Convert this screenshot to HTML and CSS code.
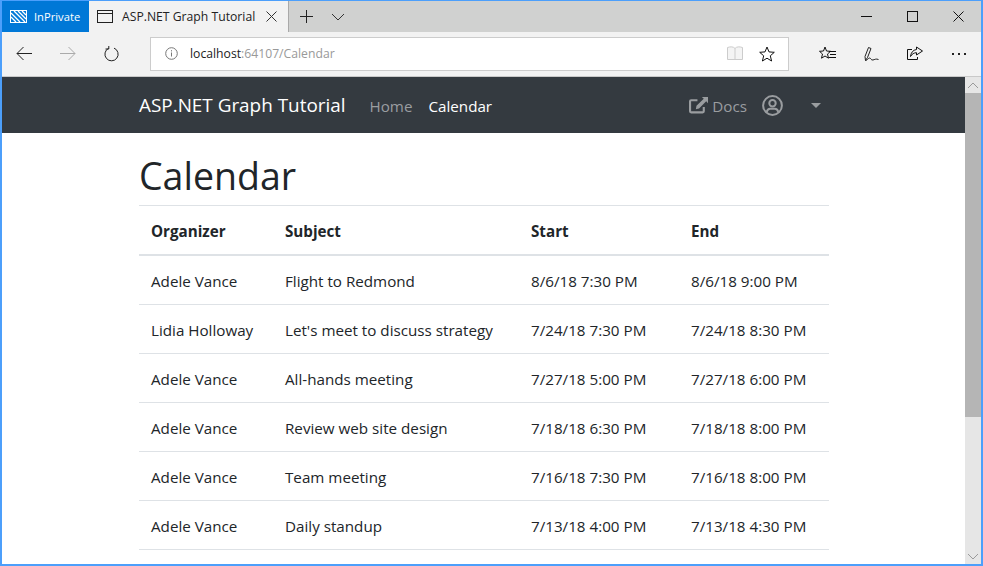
FILE: index.html
```html
<!DOCTYPE html>
<html>
	<head>
		<meta charset="UTF-8">
		<title>ASP.NET Graph Tutorial</title>
		<link rel="stylesheet" href="styles.css">
	</head>

	<body>
		<div class="window">
			<!-- tab strip -->
			<div class="tabstrip">
				<div class="inprivate">
					<svg class="ip-icon" width="17" height="13" viewBox="0 0 17 13">
						<rect x="0.5" y="0.5" width="16" height="12" fill="none" stroke="#fff"/>
						<path d="M1 3l9 9M1 7l5 5M4 1l11 11M8 1l8 8M12 1l4 4" stroke="#fff" stroke-width="1.3" fill="none"/>
					</svg>
					<span>InPrivate</span>
				</div>
				<div class="tab">
					<svg width="16" height="13" viewBox="0 0 16 13">
						<rect x="0.5" y="0.5" width="15" height="12" fill="none" stroke="#222"/>
						<path d="M0 3.5h16" stroke="#222"/>
					</svg>
					<span class="tab-title">ASP.NET Graph Tutorial</span>
					<svg class="tab-close" width="11" height="11" viewBox="0 0 11 11">
						<path d="M0.5 0.5l10 10M10.5 0.5l-10 10" stroke="#333" fill="none"/>
					</svg>
				</div>
				<div class="tab-tools">
					<svg width="15" height="15" viewBox="0 0 15 15"><path d="M7.5 1v13M1 7.5h13" stroke="#222" fill="none"/></svg>
					<svg width="14" height="8" viewBox="0 0 14 8"><path d="M1 1l6 6 6-6" stroke="#333" fill="none"/></svg>
				</div>
				<div class="win-btns">
					<svg width="11" height="11" viewBox="0 0 11 11"><path d="M0 5.5h11" stroke="#111"/></svg>
					<svg width="11" height="11" viewBox="0 0 11 11"><rect x="0.5" y="0.5" width="10" height="10" fill="none" stroke="#111"/></svg>
					<svg width="11" height="11" viewBox="0 0 11 11"><path d="M0.5 0.5l10 10M10.5 0.5l-10 10" stroke="#111" fill="none"/></svg>
				</div>
			</div>

			<!-- address bar -->
			<div class="toolbar">
				<div class="nav-btns">
					<svg width="16" height="15" viewBox="0 0 16 15"><path d="M16 7.5H1M7.5 1L1 7.5 7.5 14" stroke="#222" fill="none"/></svg>
					<svg width="16" height="15" viewBox="0 0 16 15"><path d="M0 7.5h15M8.5 1l6.500 6.500L8.500 14" stroke="#aaa" fill="none"/></svg>
					<svg width="15" height="16" viewBox="0 0 15 16"><path d="M4.600 2.300A6.600 6.600 0 1 0 10 2.100M4.800 0v3h-3.300" stroke="#222" fill="none"/></svg>
				</div>
				<div class="address">
					<svg width="13" height="13" viewBox="0 0 13 13">
						<circle cx="6.500" cy="6.500" r="5.800" fill="none" stroke="#777"/>
						<path d="M6.500 5.500v4M6.500 3.200v1.200" stroke="#777" fill="none"/>
					</svg>
					<span class="url"><span class="host">localhost</span>:64107/Calendar</span>
					<svg class="read-icon" width="16" height="15" viewBox="0 0 16 15">
						<path d="M0.500 1.500c3-1 6-1 7.500 1 1.500-2 4.500-2 7.500-1v12h-15zM8 2.500v11" stroke="#ccc" fill="#f4f4f4"/>
					</svg>
					<svg class="fav-icon" width="16" height="16" viewBox="0 0 16 16">
						<path d="M8 1l2 4.900 5.300.4-4 3.500 1.300 5.200L8 12.200l-4.600 2.800 1.300-5.200-4-3.500L6 5.900z" stroke="#111" fill="none"/>
					</svg>
				</div>
				<div class="tool-btns">
					<svg width="17" height="16" viewBox="0 0 17 16">
						<path d="M6 1l1.500 4 4 .3-3 2.700 1 4.200L6 10l-3.500 2.200 1-4.200-3-2.700 4-.3z" stroke="#111" fill="none"/>
						<path d="M10 5.500h7M11 8.500h6M10 11.500h7" stroke="#111" fill="none"/>
					</svg>
					<svg width="15" height="16" viewBox="0 0 15 16">
						<path d="M1.500 14.500L1 10.500 4.500 1.500l2.500 1-3.500 9zM1.500 14.500c2 0 2.500-2.500 4-2.500 1.500 0 1.500 2.500 3.500 2 1.500-.4 3-1.500 5.500-.5" stroke="#222" fill="none"/>
					</svg>
					<svg width="16" height="16" viewBox="0 0 16 16">
						<path d="M5 3.500H0.500v10h10V11" stroke="#111" fill="none"/>
						<path d="M9.500 1l6 4-6 4V6.700C7 6.700 5 8 3.500 10.500c.5-4 2.500-6.500 6-7z" stroke="#111" fill="none"/>
					</svg>
					<span class="more"><i></i><i></i><i></i></span>
				</div>
			</div>

			<div class="viewport">
				<div class="page">
					<!-- navbar -->
					<nav class="navbar">
						<div class="nav-inner">
							<a class="brand">ASP.NET Graph Tutorial</a>
							<a class="nav-link">Home</a>
							<a class="nav-link active">Calendar</a>
							<div class="nav-right">
								<a class="nav-link docs">
									<svg width="19" height="17" viewBox="0 0 18 16">
										<path d="M14 9.500v4a1 1 0 0 1-1 1H2a1 1 0 0 1-1-1V4a1 1 0 0 1 1-1h6" stroke="#9a9da0" stroke-width="2" fill="none"/>
										<path d="M6.500 11.500l.6-3.200L14 1.500l-1.800-1.500H18v5.800L16.300 4 9.500 10.800z" fill="#9a9da0"/>
									</svg>
									Docs
								</a>
								<svg class="avatar" width="21" height="21" viewBox="0 0 21 21">
									<circle cx="10.500" cy="10.500" r="9.400" fill="none" stroke="#9a9da0" stroke-width="2"/>
									<circle cx="10.500" cy="8.300" r="3.200" fill="none" stroke="#9a9da0" stroke-width="2"/>
									<path d="M4.700 17c.6-2.500 2-3.300 3.400-3.300h4.800c1.400 0 2.800.8 3.400 3.300" fill="none" stroke="#9a9da0" stroke-width="2"/>
								</svg>
								<span class="caret"></span>
							</div>
						</div>
					</nav>

					<main class="container">
						<h1>Calendar</h1>
						<table>
							<thead>
								<tr>
									<th class="c-org">Organizer</th>
									<th class="c-sub">Subject</th>
									<th class="c-start">Start</th>
									<th>End</th>
								</tr>
							</thead>
							<tbody>
								<tr>
									<td>Adele Vance</td>
									<td>Flight to Redmond</td>
									<td>8/6/18 7:30 PM</td>
									<td>8/6/18 9:00 PM</td>
								</tr>
								<tr>
									<td>Lidia Holloway</td>
									<td>Let's meet to discuss strategy</td>
									<td>7/24/18 7:30 PM</td>
									<td>7/24/18 8:30 PM</td>
								</tr>
								<tr>
									<td>Adele Vance</td>
									<td>All-hands meeting</td>
									<td>7/27/18 5:00 PM</td>
									<td>7/27/18 6:00 PM</td>
								</tr>
								<tr>
									<td>Adele Vance</td>
									<td>Review web site design</td>
									<td>7/18/18 6:30 PM</td>
									<td>7/18/18 8:00 PM</td>
								</tr>
								<tr>
									<td>Adele Vance</td>
									<td>Team meeting</td>
									<td>7/16/18 7:30 PM</td>
									<td>7/16/18 8:00 PM</td>
								</tr>
								<tr>
									<td>Adele Vance</td>
									<td>Daily standup</td>
									<td>7/13/18 4:00 PM</td>
									<td>7/13/18 4:30 PM</td>
								</tr>
							</tbody>
						</table>
					</main>
				</div>

				<div class="scrollbar">
					<div class="sb-btn">
						<svg width="12" height="7" viewBox="0 0 12 7"><path d="M1 6l5-5 5 5" stroke="#9a9a9a" fill="none"/></svg>
					</div>
					<div class="sb-thumb"></div>
					<div class="sb-track"></div>
					<div class="sb-btn">
						<svg width="12" height="7" viewBox="0 0 12 7"><path d="M1 1l5 5 5-5" stroke="#9a9a9a" fill="none"/></svg>
					</div>
				</div>
			</div>
		</div>
	</body>
</html>
```

FILE: styles.css
```css
*{
	margin: 0;
	padding: 0;
	box-sizing: border-box;
}
html, body{
	height: 100%;
	overflow: hidden;
}
body{
	font-family: "Open Sans", "Noto Sans", sans-serif;
	color: #212529;
	background: #fff;
}
svg{
	display: block;
	flex: none;
}
.window{
	height: 566px;
	display: flex;
	flex-direction: column;
	border: 2px solid #4c9ffb;
	border-top-width: 1px;
}

/* tab strip */
.tabstrip{
	height: 31px;
	display: flex;
	background: #d0d1d0;
	flex: none;
}
.inprivate{
	width: 87px;
	background: #0078d7;
	color: #fff;
	display: flex;
	align-items: center;
	padding-left: 8px;
	gap: 7px;
	font-size: 11.2px;
}
.tab{
	width: 200px;
	background: #f2f2f2;
	border-right: 1px solid #a9a9a9;
	display: flex;
	align-items: center;
	padding-left: 8px;
	font-size: 12.2px;
}
.tab-title{
	margin-left: 9px;
	margin-top: -1px;
	color: #222;
}
.tab-close{
	margin-left: 11px;
}
.tab-tools{
	display: flex;
	align-items: center;
	gap: 17px;
	padding-left: 10px;
}
.win-btns{
	margin-left: auto;
	display: flex;
	align-items: center;
	gap: 35px;
	padding-right: 17px;
}

/* address bar */
.toolbar{
	height: 45px;
	flex: none;
	display: flex;
	align-items: center;
	background: #f2f2f2;
	border-bottom: 1px solid #c9c9c9;
	padding-bottom: 1px;
}
.nav-btns{
	width: 148px;
	display: flex;
	align-items: center;
	gap: 28px;
	padding-left: 14px;
}
.address{
	width: 639px;
	height: 34px;
	background: #fff;
	border: 1px solid #ccc;
	display: flex;
	align-items: center;
	padding-left: 14px;
}
.url{
	margin-left: 12px;
	font-size: 12.2px;
	color: #999;
}
.host{
	color: #222;
}
.read-icon{
	margin-left: auto;
}
.fav-icon{
	margin: 0 13px 0 16px;
}
.tool-btns{
	display: flex;
	align-items: center;
	gap: 28px;
	padding-left: 30px;
}
.more{
	display: flex;
	gap: 4px;
	margin-left: 1px;
}
.more i{
	width: 2px;
	height: 2px;
	background: #222;
}

/* page */
.viewport{
	flex: 1;
	min-height: 0;
	display: flex;
}
.page{
	flex: 1;
	overflow: hidden;
}
.navbar{
	height: 56px;
	background: #343a40;
}
.nav-inner{
	width: 690px;
	height: 100%;
	margin-left: 137px;
	display: flex;
	align-items: center;
}
.brand{
	font-size: 18.9px;
	color: #fff;
	margin-right: 24px;
}
.nav-link{
	font-size: 15.2px;
	color: #9a9da0;
	margin-right: 16px;
	padding-top: 1px;
}
.nav-link.active{
	color: #fff;
}
.nav-right{
	margin-left: auto;
	display: flex;
	align-items: center;
}
.docs{
	display: flex;
	align-items: center;
	gap: 4px;
	margin-right: 15px;
}
.avatar{
	margin-right: 28px;
}
.caret{
	width: 0;
	height: 0;
	border-left: 5px solid transparent;
	border-right: 5px solid transparent;
	border-top: 5px solid #9a9da0;
	margin-right: 8px;
}
.container{
	width: 690px;
	margin-left: 137px;
	padding-top: 19px;
}
h1{
	font-size: 37.5px;
	font-weight: 400;
	line-height: 48px;
	margin-bottom: 5px;
}
table{
	width: 690px;
	border-collapse: collapse;
	table-layout: fixed;
	font-size: 15.2px;
	line-height: 24px;
}
th, td{
	padding: 13px 12px 11px;
	text-align: left;
	border-top: 1px solid #dee2e6;
	font-weight: 400;
	white-space: nowrap;
}
th{
	font-weight: 700;
	border-bottom: 2px solid #dee2e6;
}
tbody tr:last-child td{
	border-bottom: 1px solid #dee2e6;
}
.c-org{
	width: 134px;
}
.c-sub{
	width: 246px;
}
.c-start{
	width: 160px;
}

/* scrollbar */
.scrollbar{
	width: 16px;
	flex: none;
	display: flex;
	flex-direction: column;
	background: #e6e6e6;
}
.sb-btn{
	height: 16px;
	display: flex;
	align-items: center;
	justify-content: center;
}
.sb-thumb{
	height: 324px;
	background: #b5b5b5;
}
.sb-track{
	flex: 1;
}
```
